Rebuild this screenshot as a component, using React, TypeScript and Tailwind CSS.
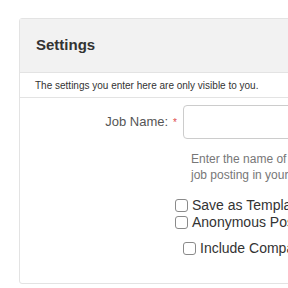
import { useState } from "react";

const options = [
  { id: "template", label: "Save as Template" },
  { id: "anonymous", label: "Anonymous Posting" },
];

const Checkbox = ({ label }: { label: string }) => {
  const [checked, setChecked] = useState<boolean>(false);
  return (
    <label className="flex items-center h-[17px] whitespace-nowrap text-[14px] text-[#333]">
      <input
        type="checkbox"
        checked={checked}
        onChange={() => setChecked(!checked)}
        className="appearance-none w-[13px] h-[13px] shrink-0 rounded-[3px] border border-[#8a8a8a] bg-white"
      />
      <span className="ml-[4px]">{label}</span>
    </label>
  );
};

const App = () => {
  return (
    <div
      className="w-[288px] h-[288px] overflow-hidden bg-white"
      style={{ fontFamily: '"Liberation Sans", Arial, sans-serif' }}
    >
      <div className="ml-[19px] mt-[18px] w-[420px] h-[266px] border border-[#e3e3e3] rounded-[3px] bg-white">
        {/* Header */}
        <div className="h-[54px] flex items-center px-[16px] bg-[#f2f2f2] border-b border-[#e3e3e3]">
          <h3 className="text-[15px] font-bold text-[#333]">Settings</h3>
        </div>
        <div className="h-[25px] flex items-center px-[15px] border-b border-[#e3e3e3]">
          <p className="text-[10px] text-[#333] whitespace-nowrap">
            The settings you enter here are only visible to you.
          </p>
        </div>

        {/* Body */}
        <div className="pt-[7px]">
          <div className="flex items-center">
            <div className="w-[158px] flex justify-end items-center pr-[1px]">
              <span className="text-[13px] text-[#555]">Job Name:</span>
              <span className="ml-[5px] text-[10px] text-[#e04b4b]">*</span>
            </div>
            <input
              type="text"
              className="ml-[5px] w-[220px] h-[34px] rounded-[4px] border border-[#ccc] bg-white"
            />
          </div>
          <p className="ml-[171px] mt-[12px] w-[200px] text-[12px] leading-[16px] text-[#777]">
            Enter the name of this
            <br />
            job posting in your records.
          </p>
          <div className="ml-[155px] mt-[14px] flex flex-col">
            {options.map((o) => (
              <Checkbox key={o.id} label={o.label} />
            ))}
          </div>
          <div className="ml-[163px] mt-[9px]">
            <Checkbox label="Include Company Info" />
          </div>
        </div>
      </div>
    </div>
  );
};

export default App;
